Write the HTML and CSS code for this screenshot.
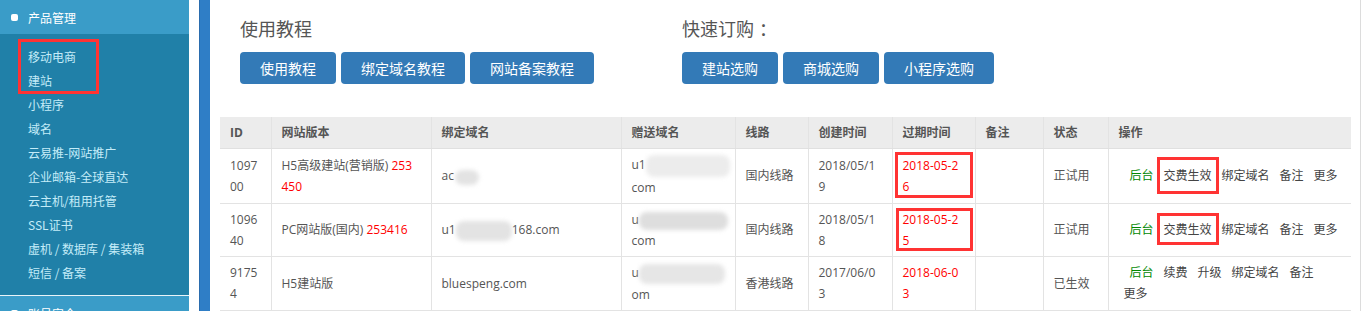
FILE: index.html
```html
<!DOCTYPE html>
<html lang="zh-CN">
<head>
<meta charset="utf-8">
<title>产品管理</title>
<link rel="stylesheet" href="styles.css">
</head>
<body>
<aside class="sidebar">
  <div class="nav-head"><span class="dot"></span>产品管理</div>
  <nav class="nav-sub">
    <div class="nav-mark">
      <a href="#">移动电商</a>
      <a href="#">建站</a>
    </div>
    <a href="#">小程序</a>
    <a href="#">域名</a>
    <a href="#">云易推-网站推广</a>
    <a href="#">企业邮箱-全球直达</a>
    <a href="#">云主机/租用托管</a>
    <a href="#">SSL证书</a>
    <a href="#">虚机 / 数据库 / 集装箱</a>
    <a href="#">短信 / 备案</a>
  </nav>
  <div class="nav-head"><span class="dot"></span>账号安全</div>
</aside>
<div class="bar"></div>
<main class="main">
  <section class="quick">
    <div class="quick-group guide">
      <h3>使用教程</h3>
      <div class="btns">
        <a class="btn" href="#">使用教程</a>
        <a class="btn" href="#">绑定域名教程</a>
        <a class="btn" href="#">网站备案教程</a>
      </div>
    </div>
    <div class="quick-group">
      <h3>快速订购<span class="colon">：</span></h3>
      <div class="btns">
        <a class="btn" href="#">建站选购</a>
        <a class="btn" href="#">商城选购</a>
        <a class="btn" href="#">小程序选购</a>
      </div>
    </div>
  </section>
  <table class="list">
    <colgroup>
      <col class="c-id"><col class="c-ver"><col class="c-dom"><col class="c-gift"><col class="c-line">
      <col class="c-date"><col class="c-exp"><col class="c-note"><col class="c-state"><col class="c-ops">
    </colgroup>
    <thead>
      <tr>
        <th>ID</th><th>网站版本</th><th>绑定域名</th><th>赠送域名</th><th>线路</th>
        <th>创建时间</th><th>过期时间</th><th>备注</th><th>状态</th><th>操作</th>
      </tr>
    </thead>
    <tbody>
      <tr>
        <td>109700</td>
        <td>H5高级建站(营销版) <span class="red">253450</span></td>
        <td>ac<span class="blur b1"></span></td>
        <td>u1<span class="blur g1"></span><br>com</td>
        <td>国内线路</td>
        <td>2018/05/19</td>
        <td class="red marked m1">2018-05-26</td>
        <td></td>
        <td>正试用</td>
        <td class="ops"><a class="green" href="#">后台</a><a class="boxed x1" href="#">交费生效</a><a href="#">绑定域名</a><a href="#">备注</a><a href="#">更多</a></td>
      </tr>
      <tr>
        <td>109640</td>
        <td>PC网站版(国内) <span class="red">253416</span></td>
        <td>u1<span class="blur b2"></span>168.com</td>
        <td>u<span class="blur g2"></span><br>com</td>
        <td>国内线路</td>
        <td>2018/05/18</td>
        <td class="red marked m2">2018-05-25</td>
        <td></td>
        <td>正试用</td>
        <td class="ops"><a class="green" href="#">后台</a><a class="boxed x2" href="#">交费生效</a><a href="#">绑定域名</a><a href="#">备注</a><a href="#">更多</a></td>
      </tr>
      <tr>
        <td>91754</td>
        <td>H5建站版</td>
        <td>bluespeng.com</td>
        <td>u<span class="blur g3"></span><br>om</td>
        <td>香港线路</td>
        <td>2017/06/03</td>
        <td class="red">2018-06-03</td>
        <td></td>
        <td>已生效</td>
        <td class="ops"><a class="green" href="#">后台</a><a href="#">续费</a><a href="#">升级</a><a href="#">绑定域名</a><a href="#">备注</a><a href="#">更多</a></td>
      </tr>
      <tr>
        <td>88120</td>
        <td>PC网站版(国内)</td>
        <td>www.example.cn</td>
        <td>u<span class="blur g3"></span><br>om</td>
        <td>国内线路</td>
        <td>2017/03/12</td>
        <td class="red">2018-03-12</td>
        <td></td>
        <td>已生效</td>
        <td class="ops"><a class="green" href="#">后台</a><a href="#">续费</a><a href="#">升级</a><a href="#">绑定域名</a><a href="#">备注</a><a href="#">更多</a></td>
      </tr>
    </tbody>
  </table>
</main>
</body>
</html>
```

FILE: styles.css
```css
*, *::before, *::after { box-sizing: border-box; }
html, body { margin: 0; padding: 0; }
body {
  display: flex;
  height: 100vh;
  overflow: hidden;
  background: #fff;
  font-family: "Open Sans", "Noto Sans CJK SC", sans-serif;
  font-size: 12px;
  color: #555;
}
a { text-decoration: none; color: inherit; }

/* sidebar */
.sidebar {
  width: 189px;
  flex: none;
  margin-right: 10px;
  background: #2080a8;
  font-family: "Noto Sans CJK SC", sans-serif;
}
.nav-head {
  display: flex;
  align-items: center;
  height: 34px;
  padding-left: 11px;
  background: #3a9cc8;
  color: #fff;
  font-size: 12px;
}
.dot {
  width: 7px;
  height: 7px;
  border-radius: 2px;
  background: #fff;
  margin-right: 10px;
}
.nav-sub {
  padding: 11px 0 10px;
  border-bottom: 1px solid #e8f4f9;
}
.nav-sub a {
  display: block;
  height: 24px;
  line-height: 24px;
  padding-left: 28px;
  color: #c4ecf8;
}
.nav-mark { position: relative; }
.nav-mark::after {
  content: "";
  position: absolute;
  left: 18px;
  top: -6px;
  width: 81px;
  height: 55px;
  border: 3px solid #f33;
}

.bar {
  width: 11px;
  flex: none;
  background: #2f7ec6;
  border-left: 1px solid #2a6cae;
}

/* main */
.main {
  flex: 1;
  min-width: 0;
  margin-right: 3px;
  border-right: 1px solid #dcdcdc;
  padding: 16px 9px 0 10px;
}
.quick {
  display: flex;
  padding: 0 20px;
}
.guide { width: 442px; }
.quick h3 {
  margin: 0 0 12px;
  font-size: 18px;
  line-height: 24px;
  font-weight: normal;
  color: #555;
  font-family: "Noto Sans CJK SC", sans-serif;
}
.colon { padding-left: 5px; }
.btns { display: flex; gap: 5px; }
.btn {
  display: block;
  height: 32px;
  line-height: 32px;
  padding: 0 20px;
  border-radius: 4px;
  background: #337ab7;
  color: #fff;
  font-size: 14px;
  font-family: "Noto Sans CJK SC", sans-serif;
}

/* table */
.list {
  width: 1131px;
  margin-top: 33px;
  border-collapse: collapse;
  table-layout: fixed;
}
.c-id { width: 51px; }
.c-ver { width: 160px; }
.c-dom { width: 190px; }
.c-gift { width: 114px; }
.c-line { width: 73px; }
.c-date { width: 84px; }
.c-exp { width: 83px; }
.c-note { width: 68px; }
.c-state { width: 65px; }
.c-ops { width: 243px; }
.list th, .list td {
  padding: 5px 12px 5px 10px;
  line-height: 21px;
  text-align: left;
  vertical-align: middle;
  border-bottom: 1px solid #e3e3e3;
  border-left: 1px solid #e3e3e3;
  word-break: break-all;
}
.list th:first-child, .list td:first-child { border-left: 0; }
.list th {
  background: #ececec;
  color: #555;
  font-weight: bold;
  border-bottom-color: #e0e0e0;
}
.list td { color: #555; }
.red { color: #f00; }
.list td.red { color: #f00; }
.green { color: #080; }

.blur {
  display: inline-block;
  vertical-align: middle;
  background: #e3e3e3;
  border-radius: 8px;
  filter: blur(2px);
}
.b1 { width: 24px; height: 15px; margin-left: 1px; }
.b2 { width: 56px; height: 20px; }
.g1 { width: 84px; height: 22px; margin-right: -12px; background: #ececec; }
.g2 { width: 89px; height: 18px; margin-right: -12px; background: #dedede; }
.g3 { width: 86px; height: 20px; margin-right: -12px; background: #e6e6e6; }

.marked { position: relative; }
.marked::after {
  content: "";
  position: absolute;
  border: 3px solid #f33;
}
.m1::after { left: 2px; right: 2px; top: 3px; bottom: 5px; }
.m2::after { left: 3px; right: 2px; top: 4px; bottom: 5px; }

.list td.ops { padding-left: 10px; padding-right: 5px; word-break: normal; }
.ops a { display: inline-block; white-space: nowrap; margin: 0 5px; color: #444; }
.ops a.green { color: #080; margin-left: 11px; }
.boxed { position: relative; }
.boxed::after {
  content: "";
  position: absolute;
  left: -7px;
  right: -7px;
  border: 3px solid #f33;
}
.x1::after { top: -8px; bottom: -8px; }
.x2::after { top: -6px; bottom: -5px; }
```
